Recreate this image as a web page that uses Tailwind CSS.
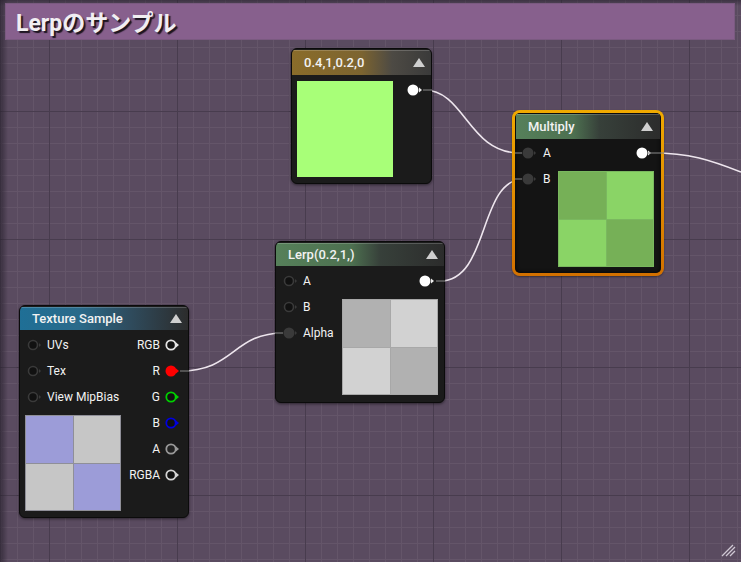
<!DOCTYPE html>
<html lang="en">
<head>
  <meta charset="UTF-8">
  <title>Lerpのサンプル</title>
  <script src="https://cdn.jsdelivr.net/npm/@tailwindcss/browser@4"></script>
</head>
<body class="bg-[#5a4b60]">
  <div class="relative w-[741px] h-[562px] overflow-hidden bg-[#5a4b60] bg-[linear-gradient(#483c4e_1px,transparent_1px),linear-gradient(90deg,#483c4e_1px,transparent_1px),linear-gradient(#645569_1px,transparent_1px),linear-gradient(90deg,#645569_1px,transparent_1px)] bg-[size:128px_128px,128px_128px,16px_16px,16px_16px] bg-[position:0_111px,49px_0,0_15px,1px_0] font-['Roboto','Noto_Sans_CJK_JP',sans-serif] text-[12px] text-[#f2f2f2]">

    <!-- edge shading and wires -->
    <svg class="absolute inset-0" width="741" height="562">
      <defs>
        <linearGradient id="edgeL"><stop offset="0" stop-color="#2a2330" stop-opacity=".75"/><stop offset="1" stop-color="#2a2330" stop-opacity="0"/></linearGradient>
        <linearGradient id="edgeT" x2="0" y2="1"><stop offset="0" stop-color="#2a2330" stop-opacity=".6"/><stop offset="1" stop-color="#2a2330" stop-opacity="0"/></linearGradient>
      </defs>
      <rect width="8" height="562" fill="url(#edgeL)"/>
      <rect width="741" height="6" fill="url(#edgeT)"/>
      <g fill="none" stroke="#eee6ee" stroke-width="1.6">
        <path d="M424 90C465 90 468 153 520 153"/>
        <path d="M440 281C490 281 478 179 524 179"/>
        <path d="M180 371C235 371 232 333 284 333"/>
        <path d="M652 153C690 153 710 160 741 172"/>
      </g>
      <g stroke="#cfc8d4" stroke-width="1.3">
        <path d="M722 556L733 545M726 556L735 547M730 556L735 551"/>
      </g>
    </svg>

    <!-- comment title -->
    <div class="absolute left-[5px] top-[3px] w-[730px] h-[37px] bg-[#87608d] border border-[#7a5a80] pl-[10px] pt-[3px] flex items-center text-[23px] leading-none font-bold text-[#f1eef2] [text-shadow:2px_2px_1px_#1d1520]">Lerpのサンプル</div>

    <!-- constant -->
    <div class="absolute left-[291px] top-[48px] w-[141px] h-[136px] rounded-[6px] bg-[#1b1b1b] border border-[#0b0b0b] shadow-[0_1px_3px_#0008] overflow-hidden">
      <div class="h-[25px] mt-[1px] flex items-center justify-between pl-[12px] pr-[6px] text-[13px] font-medium shadow-[inset_0_1px_0_#ffffff30] bg-[linear-gradient(90deg,#8a6c2a_0%,#7c6430_50%,#4d4a44_72%,#3a3a3a_100%)]">
        <span>0.4,1,0.2,0</span>
        <span class="w-0 h-0 border-x-[6px] border-x-transparent border-b-[9px] border-b-[#cfcfcf]"></span>
      </div>
      <div class="flex pl-[5px] pt-[6px]">
        <div class="w-[96px] h-[96px] bg-[#a8ff78]"></div>
        <svg class="ml-[11px] mt-[1px]" width="18" height="16"><circle cx="9" cy="8" r="5.5" fill="#fff"/><path d="M15 5.5L18 8L15 10.5Z" fill="#eee"/></svg>
      </div>
    </div>

    <!-- multiply -->
    <div class="absolute left-[512px] top-[110px] w-[152px] h-[166px] rounded-[8px] p-[3px] bg-[linear-gradient(180deg,#f0aa00,#d27000)] shadow-[0_1px_2px_#0006]">
      <div class="w-full h-full rounded-[5px] bg-[#141414] shadow-[inset_0_0_4px_#000] overflow-hidden">
        <div class="h-[25px] mx-[1px] mt-[1px] flex items-center justify-between pl-[12px] pr-[7px] text-[13px] font-medium shadow-[inset_0_1px_0_#ffffff30] bg-[linear-gradient(90deg,#56805a_0%,#4d7050_40%,#37403a_58%,#2c2c2c_100%)]">
          <span>Multiply</span>
          <span class="w-0 h-0 border-x-[6px] border-x-transparent border-b-[9px] border-b-[#cfcfcf]"></span>
        </div>
        <div class="flex justify-between pl-[6px] pr-[7px]">
          <div class="flex flex-col">
            <div class="h-[26px] mt-[1px] flex items-center gap-[6px]"><svg width="16" height="14"><circle cx="7" cy="7" r="5.5" fill="#3a3a3a"/><path d="M13 5L15 7L13 9Z" fill="#3a3a3a"/></svg><span>A</span></div>
            <div class="h-[26px] flex items-center gap-[6px]"><svg width="16" height="14"><circle cx="7" cy="7" r="5.5" fill="#3a3a3a"/><path d="M13 5L15 7L13 9Z" fill="#3a3a3a"/></svg><span>B</span></div>
          </div>
          <div class="flex flex-col items-end">
            <svg class="mt-[7px] mr-[3px]" width="16" height="14"><circle cx="7" cy="7" r="5.5" fill="#fff"/><path d="M13 4.5L16 7L13 9.5Z" fill="#eee"/></svg>
            <div class="mt-[11px] grid grid-cols-2 w-[96px] h-[96px] bg-[#7ab85f] p-px gap-px">
              <div class="bg-[#76b057]"></div><div class="bg-[#8ad466]"></div>
              <div class="bg-[#8ad466]"></div><div class="bg-[#76b057]"></div>
            </div>
          </div>
        </div>
      </div>
    </div>

    <!-- lerp -->
    <div class="absolute left-[275px] top-[241px] w-[170px] h-[162px] rounded-[6px] bg-[#1b1b1b] border border-[#0b0b0b] shadow-[0_1px_3px_#0008] overflow-hidden">
      <div class="h-[23px] mt-[1px] flex items-center justify-between pl-[12px] pr-[6px] text-[13px] font-medium shadow-[inset_0_1px_0_#ffffff30] bg-[linear-gradient(90deg,#56805a_0%,#4d7050_45%,#37403a_62%,#2c2c2c_100%)]">
        <span>Lerp(0.2,1,)</span>
        <span class="w-0 h-0 border-x-[6px] border-x-transparent border-b-[9px] border-b-[#cfcfcf]"></span>
      </div>
      <div class="flex justify-between pl-[6px] pr-[6px] pt-[2px]">
        <div class="flex flex-col">
          <div class="h-[26px] flex items-center gap-[5px]"><svg width="16" height="14"><circle cx="7" cy="7" r="4.5" fill="#111" stroke="#3a3a3a" stroke-width="1.6"/><path d="M13 5L15 7L13 9Z" fill="#3a3a3a"/></svg><span>A</span></div>
          <div class="h-[26px] flex items-center gap-[5px]"><svg width="16" height="14"><circle cx="7" cy="7" r="4.5" fill="#111" stroke="#3a3a3a" stroke-width="1.6"/><path d="M13 5L15 7L13 9Z" fill="#3a3a3a"/></svg><span>B</span></div>
          <div class="h-[26px] flex items-center gap-[5px]"><svg width="16" height="14"><circle cx="7" cy="7" r="5.5" fill="#3a3a3a"/><path d="M13 5L15 7L13 9Z" fill="#3a3a3a"/></svg><span>Alpha</span></div>
        </div>
        <div class="flex flex-col items-end">
          <svg class="mt-[6px] mr-[4px]" width="16" height="14"><circle cx="7" cy="7" r="5.5" fill="#fff"/><path d="M13 4.5L16 7L13 9.5Z" fill="#eee"/></svg>
          <div class="mt-[11px] grid grid-cols-2 w-[96px] h-[96px] bg-[#a8a8a8] p-px gap-px">
            <div class="bg-[#b1b1b1]"></div><div class="bg-[#d2d2d2]"></div>
            <div class="bg-[#d2d2d2]"></div><div class="bg-[#b1b1b1]"></div>
          </div>
        </div>
      </div>
    </div>

    <!-- texture sample -->
    <div class="absolute left-[19px] top-[305px] w-[170px] h-[213px] rounded-[6px] bg-[#1b1b1b] border border-[#0b0b0b] shadow-[0_1px_3px_#0008] overflow-hidden">
      <div class="h-[23px] mt-[1px] flex items-center justify-between pl-[12px] pr-[6px] text-[13px] font-medium shadow-[inset_0_1px_0_#ffffff30] bg-[linear-gradient(90deg,#1f6f96_0%,#2a6a8a_35%,#2f4c5e_65%,#2c2c2c_100%)]">
        <span>Texture Sample</span>
        <span class="w-0 h-0 border-x-[6px] border-x-transparent border-b-[9px] border-b-[#cfcfcf]"></span>
      </div>
      <div class="flex justify-between pl-[6px] pr-[9px] pt-[2px]">
        <div class="flex flex-col">
          <div class="h-[26px] flex items-center gap-[5px]"><svg width="16" height="14"><circle cx="7" cy="7" r="4.5" fill="#111" stroke="#3a3a3a" stroke-width="1.6"/><path d="M13 5L15 7L13 9Z" fill="#3a3a3a"/></svg><span>UVs</span></div>
          <div class="h-[26px] flex items-center gap-[5px]"><svg width="16" height="14"><circle cx="7" cy="7" r="4.5" fill="#111" stroke="#3a3a3a" stroke-width="1.6"/><path d="M13 5L15 7L13 9Z" fill="#3a3a3a"/></svg><span>Tex</span></div>
          <div class="h-[26px] flex items-center gap-[5px]"><svg width="16" height="14"><circle cx="7" cy="7" r="4.5" fill="#111" stroke="#3a3a3a" stroke-width="1.6"/><path d="M13 5L15 7L13 9Z" fill="#3a3a3a"/></svg><span>View MipBias</span></div>
          <div class="mt-[5px] -ml-px grid grid-cols-2 w-[96px] h-[96px] bg-[#8f8f98] p-px gap-px">
            <div class="bg-[#9c9cd8]"></div><div class="bg-[#c6c6c6]"></div>
            <div class="bg-[#c6c6c6]"></div><div class="bg-[#9c9cd8]"></div>
          </div>
        </div>
        <div class="flex flex-col items-end">
          <div class="h-[26px] flex items-center gap-[4px]"><span>RGB</span><svg width="15" height="14"><circle cx="7" cy="7" r="4.7" fill="#111" stroke="#e4e4e4" stroke-width="1.8"/><path d="M12 4.5L15 7L12 9.5Z" fill="#e4e4e4"/></svg></div>
          <div class="h-[26px] flex items-center gap-[4px]"><span>R</span><svg width="15" height="14"><circle cx="7" cy="7" r="5.5" fill="#ff0000"/><path d="M12 4.5L15 7L12 9.5Z" fill="#ff0000"/></svg></div>
          <div class="h-[26px] flex items-center gap-[4px]"><span>G</span><svg width="15" height="14"><circle cx="7" cy="7" r="4.7" fill="#111" stroke="#00d000" stroke-width="1.8"/><path d="M12 4.5L15 7L12 9.5Z" fill="#00d000"/></svg></div>
          <div class="h-[26px] flex items-center gap-[4px]"><span>B</span><svg width="15" height="14"><circle cx="7" cy="7" r="4.7" fill="#111" stroke="#0000e0" stroke-width="1.8"/><path d="M12 4.5L15 7L12 9.5Z" fill="#0000e0"/></svg></div>
          <div class="h-[26px] flex items-center gap-[4px]"><span>A</span><svg width="15" height="14"><circle cx="7" cy="7" r="4.7" fill="#222" stroke="#9a9a9a" stroke-width="1.8"/><path d="M12 4.5L15 7L12 9.5Z" fill="#9a9a9a"/></svg></div>
          <div class="h-[26px] flex items-center gap-[4px]"><span>RGBA</span><svg width="15" height="14"><circle cx="7" cy="7" r="4.7" fill="#111" stroke="#d4d4d4" stroke-width="1.8"/><path d="M12 4.5L15 7L12 9.5Z" fill="#d4d4d4"/></svg></div>
        </div>
      </div>
    </div>

    <!-- wire stubs running over the node edges -->
    <svg class="absolute inset-0" width="741" height="562">
      <g stroke="#8a8a8a" stroke-width="1.2">
        <path d="M423 90H432M648 153H664M436 281H445M180 371H189M515 153H522M515 179H522M275 333H283"/>
      </g>
    </svg>

  </div>
</body>
</html>
